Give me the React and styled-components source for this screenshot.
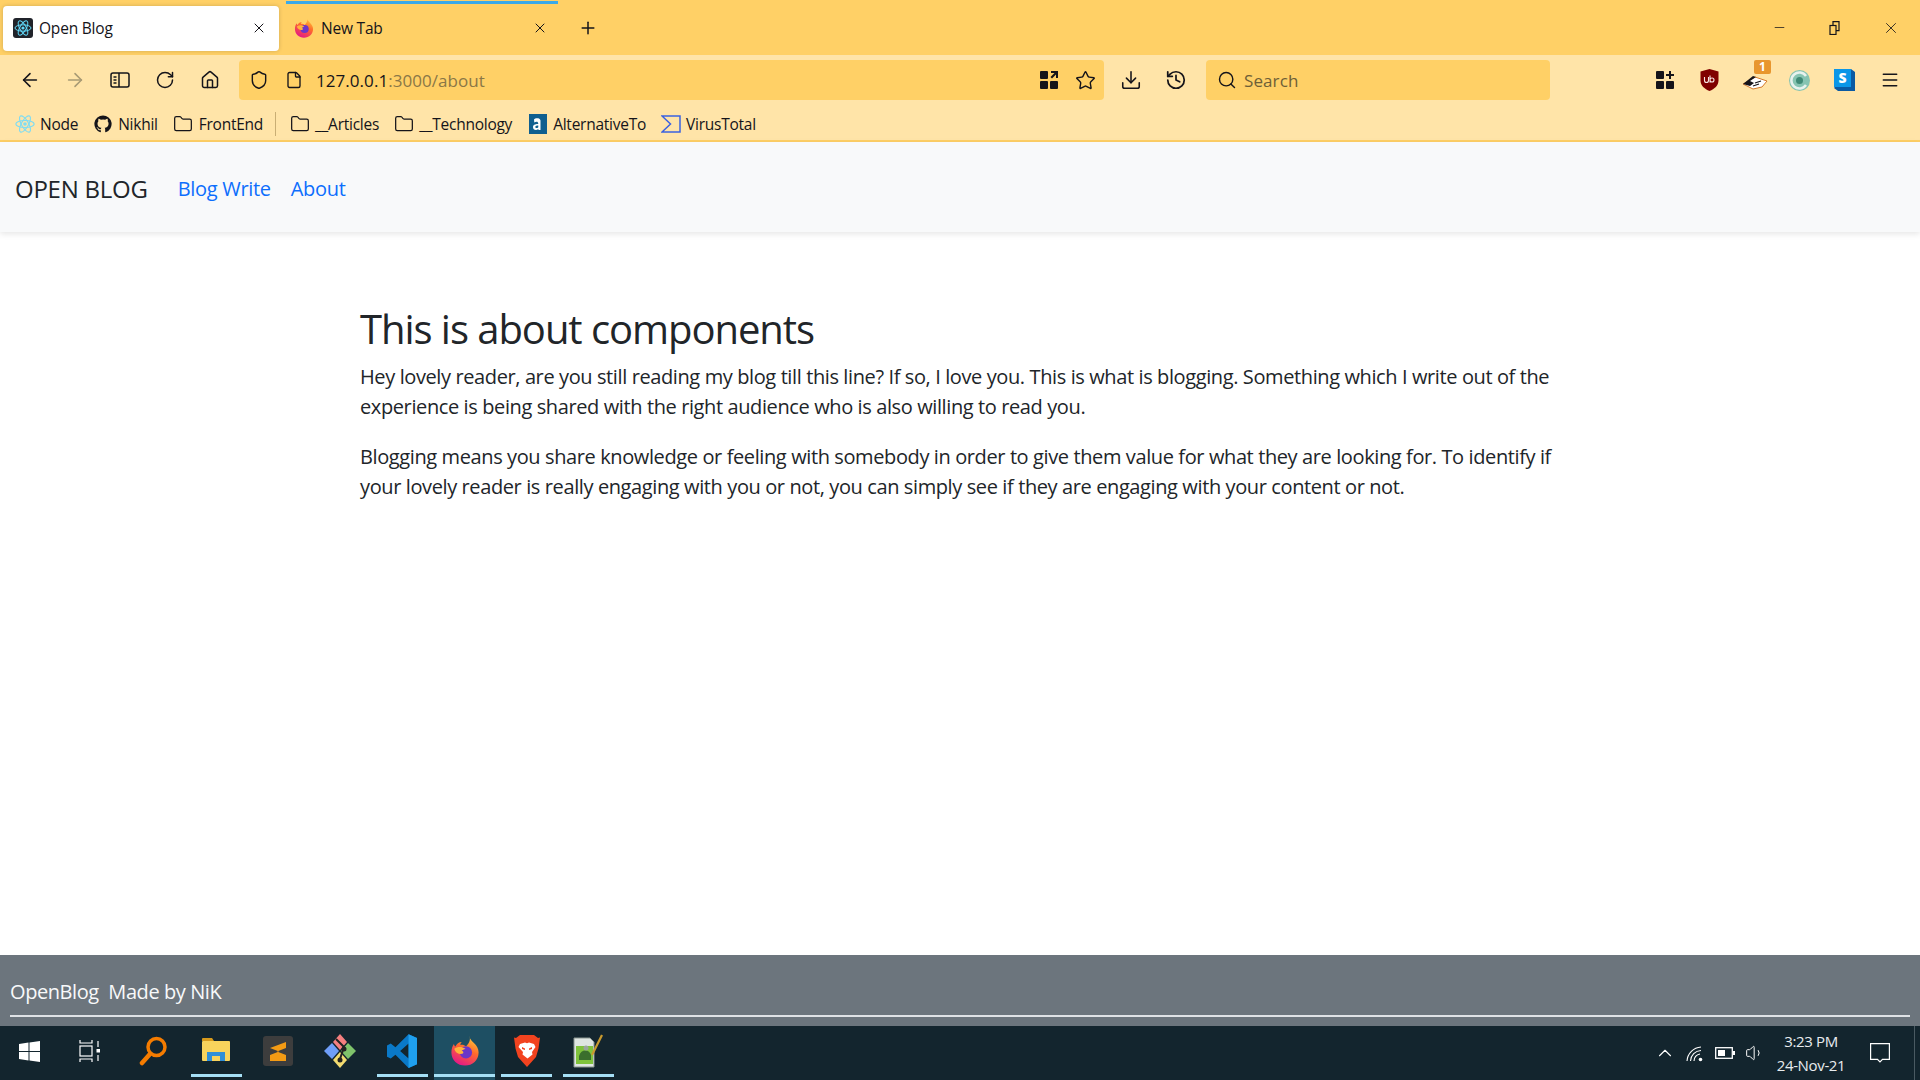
import styled, { createGlobalStyle } from "styled-components";
import {
  ArrowLeft,
  ArrowRight,
  RotateCw,
  Home,
  Shield,
  File,
  Star,
  Download,
  History,
  Search,
  Folder,
  X,
  Plus,
  Minus,
  Menu,
  ChevronUp,
  Volume1,
} from "lucide-react";

const GlobalStyle = createGlobalStyle`
  html, body { margin: 0; padding: 0; height: 100%; background: #fff; overflow: hidden; }
  * { box-sizing: border-box; }
  body { font-family: "Open Sans", "Noto Sans", sans-serif; color: #212529; }
`;

const Screen = styled.div`
  width: 1920px;
  height: 1080px;
  display: flex;
  flex-direction: column;
  overflow: hidden;
`;

/* browser chrome */
const TabBar = styled.div`
  height: 55px;
  background: #ffd066;
  display: flex;
  align-items: flex-start;
  padding-left: 3px;
  flex-shrink: 0;
`;

const Tab = styled.div`
  width: ${(p) => (p.$active ? "276px" : "272px")};
  margin-top: ${(p) => (p.$active ? "6px" : "1px")};
  height: ${(p) => (p.$active ? "45px" : "50px")};
  border-radius: ${(p) => (p.$active ? "4px" : "0")};
  background: ${(p) => (p.$active ? "#fff" : "transparent")};
  box-shadow: ${(p) => (p.$active ? "0 0 4px rgba(0,0,0,.18)" : "none")};
  border-top: ${(p) => (p.$active ? "0" : "3px solid #3ba9e8")};
  margin-left: ${(p) => (p.$active ? "0" : "7px")};
  padding: 0 ${(p) => (p.$active ? "12px" : "10px")} ${(p) => (p.$active ? "2px" : "0")} ${(p) => (p.$active ? "10px" : "8px")};
  display: flex;
  align-items: center;
  font-size: 15.5px;
  letter-spacing: -0.2px;
  color: #15141a;
`;

const TabTitle = styled.span`
  margin-left: ${(p) => p.$gap || 6}px;
  flex: 1;
`;

const NewTab = styled.div`
  width: 46px;
  height: 46px;
  margin-top: 5px;
  margin-left: 7px;
  display: flex;
  align-items: center;
  justify-content: center;
  color: #15141a;
`;

const WindowControls = styled.div`
  margin-left: auto;
  display: flex;
  height: 55px;
  align-items: center;
  padding-right: 1px;
`;

const WindowButton = styled.div`
  width: 56px;
  display: flex;
  justify-content: center;
  color: #15141a;
`;

const Toolbar = styled.div`
  height: 50px;
  background: #ffe4a8;
  display: flex;
  align-items: center;
  padding: 0 8px 0 7px;
  flex-shrink: 0;
`;

const ToolButton = styled.div`
  width: 45px;
  height: 40px;
  flex-shrink: 0;
  display: flex;
  align-items: center;
  justify-content: center;
  position: relative;
  color: ${(p) => (p.$dim ? "#a89a74" : "#15141a")};
`;

const UrlBar = styled.div`
  width: 865px;
  height: 40px;
  margin: 5px 4px 0 7px;
  align-self: flex-start;
  background: #ffd066;
  border-radius: 4px;
  display: flex;
  align-items: center;
  padding: 0 1px 0 0;
  font-size: 17px;
  letter-spacing: 0.05px;
  color: #15141a;
`;

const UrlIcon = styled.div`
  width: ${(p) => p.$w}px;
  display: flex;
  justify-content: center;
  flex-shrink: 0;
`;

const UrlText = styled.div`
  flex: 1;
  padding-left: 6px;
  span { color: #8a7746; }
`;

const SearchBar = styled.div`
  width: 344px;
  height: 40px;
  margin: 5px 0 0 8px;
  align-self: flex-start;
  background: #ffd066;
  border-radius: 4px;
  display: flex;
  align-items: center;
  padding-left: 11px;
  gap: 7px;
  font-size: 17px;
  letter-spacing: 0.1px;
  color: #6e5f37;
`;

const RightTools = styled.div`
  margin-left: auto;
  display: flex;
`;

const Badge = styled.span`
  position: absolute;
  top: 0;
  right: 6px;
  background: #e8962e;
  color: #fff;
  font-size: 12px;
  font-weight: 700;
  line-height: 14px;
  width: 17px;
  text-align: center;
  border-radius: 2px;
`;

const BookmarkBar = styled.div`
  height: 37px;
  background: #ffe4a8;
  border-bottom: 2px solid #ffd066;
  display: flex;
  align-items: center;
  padding: 2px 0 0 15px;
  font-size: 15.5px;
  letter-spacing: -0.25px;
  color: #15141a;
  flex-shrink: 0;
`;

const Bookmark = styled.div`
  display: flex;
  align-items: center;
  gap: ${(p) => p.$gap || 6}px;
  margin-right: ${(p) => p.$mr}px;
  white-space: nowrap;
`;

const BookmarkDivider = styled.div`
  width: 1px;
  height: 24px;
  background: #c9ae74;
  margin: 0 14px 0 -2px;
`;

/* page */
const Navbar = styled.nav`
  height: 90px;
  background: #f8f9fa;
  box-shadow: 0 2px 6px rgba(0, 0, 0, 0.1);
  display: flex;
  align-items: center;
  padding: 2px 0 0 15px;
  flex-shrink: 0;
  position: relative;
`;

const Brand = styled.a`
  font-size: 24px;
  letter-spacing: -0.25px;
  color: #212529;
  margin-right: 30px;
`;

const NavLink = styled.a`
  font-size: 20px;
  letter-spacing: -0.3px;
  color: #0d6efd;
  margin-right: 20px;
`;

const Main = styled.main`
  flex: 1;
  width: 1200px;
  margin: 0 auto;
  padding-top: 73px;
`;

const Heading = styled.h1`
  margin: 0 0 9px;
  font-size: 40px;
  font-weight: 400;
  line-height: 48px;
  letter-spacing: -1.05px;
  color: #212529;
`;

const Paragraph = styled.p`
  margin: 0 0 20px;
  font-size: 20px;
  line-height: 30px;
  letter-spacing: -0.39px;
`;

const Footer = styled.footer`
  height: 71px;
  background: #6c757d;
  padding: 22px 10px 0;
  color: #f8f9fa;
  font-size: 20px;
  letter-spacing: -0.42px;
  line-height: 30px;
  flex-shrink: 0;
`;

const FooterRule = styled.hr`
  margin: 8px 0 0;
  border: 0;
  border-top: 2px solid #dfe2e6;
`;

/* windows taskbar */
const Taskbar = styled.div`
  height: 54px;
  background: #13252e;
  display: flex;
  flex-shrink: 0;
  padding-right: 5px;
`;

const TaskItem = styled.div`
  width: 61px;
  margin-right: 1px;
  height: 54px;
  padding: 0 ${(p) => p.$pr || 0}px 4px 0;
  display: flex;
  align-items: center;
  justify-content: center;
  position: relative;
  background: ${(p) => (p.$active ? "#1e4f63" : "transparent")};
  &::after {
    content: "";
    display: ${(p) => (p.$open ? "block" : "none")};
    position: absolute;
    bottom: 3px;
    left: ${(p) => (p.$active ? "0" : "5px")};
    right: ${(p) => (p.$active ? "0" : "5px")};
    height: 3px;
    background: #a5dff5;
  }
`;

const Tray = styled.div`
  margin-left: auto;
  display: flex;
  align-items: center;
  color: #fff;
  padding-right: 11px;
  border-right: 1px solid #4a5a62;
`;

const TrayIcon = styled.div`
  width: ${(p) => p.$w || 30}px;
  display: flex;
  justify-content: center;
`;

const Clock = styled.div`
  width: 92px;
  margin-left: -5px;
  text-align: center;
  font-size: 15px;
  letter-spacing: -0.35px;
  line-height: 24px;
  color: #e8ecee;
`;

const ReactLogo = () => (
  <svg width="20" height="20" viewBox="0 0 24 24" fill="none" stroke="#7fdcf2" strokeWidth="1.4">
    <ellipse cx="12" cy="12" rx="11" ry="4.2" />
    <ellipse cx="12" cy="12" rx="11" ry="4.2" transform="rotate(60 12 12)" />
    <ellipse cx="12" cy="12" rx="11" ry="4.2" transform="rotate(120 12 12)" />
    <circle cx="12" cy="12" r="2.2" fill="#7fdcf2" stroke="none" />
  </svg>
);

const ReactFavicon = () => (
  <svg width="20" height="20" viewBox="0 0 20 20">
    <rect width="20" height="20" rx="3" fill="#20232a" />
    <g fill="none" stroke="#61dafb" strokeWidth="1">
      <ellipse cx="10" cy="10" rx="8" ry="3.2" />
      <ellipse cx="10" cy="10" rx="8" ry="3.2" transform="rotate(60 10 10)" />
      <ellipse cx="10" cy="10" rx="8" ry="3.2" transform="rotate(120 10 10)" />
    </g>
    <circle cx="10" cy="10" r="1.6" fill="#61dafb" />
  </svg>
);

const FirefoxLogo = ({ size = 20 }) => (
  <svg width={size} height={size} viewBox="0 0 32 32">
    <defs>
      <linearGradient id={`ffBody${size}`} x1="0.8" y1="0" x2="0.3" y2="1">
        <stop offset="0" stopColor="#ffd13a" />
        <stop offset="0.45" stopColor="#ff6a2b" />
        <stop offset="1" stopColor="#e3168a" />
      </linearGradient>
    </defs>
    <path
      d="M21 0c-.3 3.500 2.500 5 4.500 7.500C28.500 10.500 30.500 13.500 30.500 17.500 30.500 25.500 24 31.500 16 31.500S1.500 25.500 1.500 17.500c0-3.500 1-6.500 2.700-9 .2 1.300.8 2.300 1.600 2.800C7 8.500 9.500 6.500 12.500 6.500c-1 1-1.500 2-1.500 3 2-.5 4.500 0 6 1.500 3-2.500 5-6 4-11z"
      fill={`url(#ffBody${size})`}
    />
    <circle cx="17" cy="17.500" r="6.500" fill="#6c36c9" />
    <path d="M4.500 13.500c3.500-2.500 8-2.500 12 0l-4 2c2 1 2.500 3 .5 3.500-4 .5-7.500-1.500-8.500-5.500z" fill="#ffb23c" />
  </svg>
);

const GithubMark = () => (
  <svg width="18" height="18" viewBox="0 0 24 24" fill="#15141a">
    <path d="M12 .5a11.500 11.500 0 0 0-3.640 22.410c.58.11.79-.25.79-.56v-2c-3.200.7-3.880-1.540-3.880-1.540-.52-1.330-1.280-1.690-1.280-1.690-1.050-.72.08-.7.08-.7 1.160.08 1.770 1.190 1.770 1.190 1.030 1.770 2.700 1.260 3.360.96.100-.75.400-1.260.73-1.550-2.550-.29-5.240-1.280-5.240-5.690 0-1.260.45-2.280 1.190-3.090-.12-.29-.52-1.460.11-3.050 0 0 .97-.31 3.170 1.180a11 11 0 0 1 5.770 0c2.200-1.490 3.170-1.180 3.170-1.180.63 1.590.23 2.760.11 3.050.74.81 1.190 1.830 1.190 3.090 0 4.420-2.690 5.390-5.260 5.680.41.36.78 1.060.78 2.140v3.170c0 .31.21.67.8.56A11.500 11.500 0 0 0 12 .5z" />
  </svg>
);

const AltToIcon = () => (
  <svg width="18" height="20" viewBox="0 0 18 20">
    <rect width="18" height="20" fill="#0f5f8f" />
    <path
      d="M5 5.500c1-1.500 6-2 6.500 1V16H9.500l-.2-1c-2 2-5.500 1-5.300-2 .2-3 3.500-3 5.300-3 0-3-2.500-2.500-4-1.500z M9.300 11.500c-1.500 0-3 .2-3 1.500s2 1.500 3 .2z"
      fill="#fff"
      fillRule="evenodd"
    />
  </svg>
);

const VirusTotalIcon = () => (
  <svg width="20" height="20" viewBox="0 0 20 20" fill="none" stroke="#3b61e0" strokeWidth="1.5">
    <path d="M1 2h18v16H1l8.500-8z" />
  </svg>
);

const SidebarIcon = () => (
  <svg width="20" height="20" viewBox="0 0 20 20" fill="none" stroke="#15141a" strokeWidth="1.5">
    <rect x="1" y="3" width="18" height="14" rx="2" />
    <path d="M9 3v14M3.500 7h3M3.500 10h3M3.500 13h3" />
  </svg>
);

const GridIcon = ({ plus }) => (
  <svg width="18" height="20" viewBox="0 0 18 20" fill="#15141a">
    <rect x="0" y="1" width="8" height="8" rx="1" />
    <rect x="0" y="11" width="8" height="8" rx="1" />
    <rect x="10" y="11" width="8" height="8" rx="1" />
    {plus ? (
      <path d="M13 1h2v3h3v2h-3v3h-2V6h-3V4h3z" />
    ) : (
      <path d="M11 1h7v7h-2V4.500L12 8.500 10.500 7l4-4H11z" />
    )}
  </svg>
);

const UblockIcon = () => (
  <svg width="19" height="22" viewBox="0 0 19 22">
    <path d="M9.500 0l9 2.500v9c0 5-4 8.500-9 10.500C4.500 20 .5 16.500.5 11.500v-9z" fill="#800000" />
    <path
      d="M4.500 8v3.500a2 2 0 0 0 4 0V8M10 6.500v7M10 11a2 2 0 1 0 4 0 2 2 0 1 0-4 0"
      fill="none"
      stroke="#f7e4e4"
      strokeWidth="1.1"
    />
  </svg>
);

const PenIcon = () => (
  <svg width="26" height="22" viewBox="0 0 26 22">
    <path d="M1 15l12-7 12 4-5 6-9 2z" fill="#fff" stroke="#d57a2a" strokeWidth="1" />
    <path d="M1 15l10-8 3 1-6 4 4 2-4 3z" fill="#15141a" />
    <path d="M13 14l6-2M11 17l6-2" stroke="#15141a" strokeWidth="1.2" />
  </svg>
);

const CircleExt = () => (
  <svg width="21" height="21" viewBox="0 0 21 21">
    <circle cx="10.5" cy="10.5" r="10.5" fill="#86c4b2" />
    <path d="M17 6a8 8 0 1 0 0 9" fill="none" stroke="#e8f2ee" strokeWidth="2.5" />
    <circle cx="10.5" cy="10.5" r="3.500" fill="#3f8a76" />
  </svg>
);

const SkypeBox = () => (
  <svg width="21" height="22" viewBox="0 0 21 22">
    <path d="M17 0l4 3v19H4l-4-3z" fill="#0b5aa3" />
    <rect width="17" height="18" fill="#0a96e8" />
    <text x="8.500" y="14" fontSize="14" fontWeight="800" fill="#fff" textAnchor="middle" fontFamily="Open Sans">
      S
    </text>
  </svg>
);

const RestoreIcon = () => (
  <svg width="14" height="14" viewBox="0 0 14 14" fill="none" stroke="#15141a" strokeWidth="1.2">
    <rect x="2" y="4.500" width="6" height="9" />
    <path d="M5 4.500V.7h6v9H8" />
  </svg>
);

const WindowsLogo = () => (
  <svg width="21" height="21" viewBox="0 0 21 21" fill="#fff">
    <path d="M0 3l9.500-1.400V10H0zM10.500 1.400L21 0v10H10.500zM0 11h9.500v8.400L0 18zM10.500 11H21v10l-10.500-1.500z" />
  </svg>
);

const TaskViewIcon = () => (
  <svg width="22" height="24" viewBox="0 0 22 24" fill="none" stroke="#fff" strokeWidth="1.2">
    <path d="M1 1v3h12V1M1 23v-3h12v3" />
    <rect x="1" y="7" width="12" height="10" />
    <path d="M19 2v6M19 16v6" />
    <rect x="17.500" y="10" width="3.500" height="3.500" fill="#fff" stroke="none" />
  </svg>
);

const SearchApp = () => (
  <svg width="28" height="30" viewBox="0 0 28 30" fill="none" stroke="#f57c00" strokeWidth="3.5">
    <circle cx="17.500" cy="11" r="8.500" />
    <path d="M11 18l-8 9" strokeLinecap="round" strokeWidth="4.5" />
  </svg>
);

const FilesIcon = () => (
  <svg width="28" height="26" viewBox="0 0 28 26">
    <path d="M0 1a1 1 0 0 1 1-1h9l2 3H0z" fill="#d79a1c" />
    <rect y="3" width="28" height="20" rx="1" fill="#f8d35c" />
    <path d="M5 14h18v9h-5v-5h-8v5H5z" fill="#2f8fd8" />
    <rect x="10" y="18" width="8" height="5" fill="#f8d35c" />
  </svg>
);

const SublimeIcon = () => (
  <svg width="30" height="30" viewBox="0 0 30 30">
    <rect width="30" height="30" rx="3" fill="#3d3d3d" />
    <path d="M7 12l16-6v6l-9 3.500 9 3.500v6L7 25v-6l9-3.500L7 12z" fill="#f49b14" />
  </svg>
);

const GitIcon = () => (
  <svg width="32" height="36" viewBox="0 0 32 36">
    <path d="M15 18L8 10 0 18l8 8z" fill="#6f9ef8" />
    <path d="M16 17l7-8-7-8-7 8z" fill="#f57f7f" />
    <path d="M17 18l7-8 8 8-8 8z" fill="#7fc36b" />
    <path d="M16 19l7 8-7 8-7-8z" fill="#f3dc70" />
    <path d="M12 6l8 8M20 14l-4 12" stroke="#222" strokeWidth="2" fill="none" />
    <circle cx="20" cy="16" r="2.500" fill="#222" />
    <circle cx="16" cy="27" r="2.500" fill="#222" />
  </svg>
);

const VscodeIcon = () => (
  <svg width="30" height="36" viewBox="0 0 32 36">
    <path d="M23 0l9 4v28l-9 4L9 22l-5 4-4-2V12l4-2 5 4z M23 10l-9 8 9 8z" fill="#0a79c8" fillRule="evenodd" />
    <path d="M23 0l9 4v28l-9 4z" fill="#1fa0ef" />
  </svg>
);

const BraveIcon = () => (
  <svg width="26" height="32" viewBox="0 0 26 32">
    <path d="M6 0h14l4 3 2-.5-1.500 11L22 22l-9 10-9-10-2.500-8.500L0 2.500 2 3z" fill="#f2431f" />
    <path
      d="M6 9l5-1.500 2 .7 2-.7 5 1.500 1.500 3-3.500 5 .5 2.500-5 4-5-4 .5-2.500L4.500 12z"
      fill="#fff"
    />
    <path d="M8 12l3 1.500v1.500L8 14zM18 12l-3 1.500v1.500l3-1z" fill="#f2431f" />
  </svg>
);

const NotepadIcon = () => (
  <svg width="30" height="34" viewBox="0 0 30 34">
    <path d="M1 4h16l4 4v25H1z" fill="#dfe6e2" stroke="#8a9690" />
    <rect x="3" y="12" width="17" height="18" fill="#7fc33c" />
    <path d="M6 22c2-7 10-7 12-1v5H6z" fill="#3a6f2c" />
    <circle cx="13" cy="14" r="2.500" fill="#9aa59e" />
    <path d="M19 21L29 1" stroke="#c89a2e" strokeWidth="2.2" />
  </svg>
);

const WifiIcon = () => (
  <svg width="18" height="18" viewBox="0 0 18 18" fill="none" stroke="#fff" strokeWidth="1.1">
    <path d="M1 17A15 15 0 0 1 15 3M4.500 17A11 11 0 0 1 15 6.500M8 17A7.500 7.500 0 0 1 14 10" />
    <circle cx="14.500" cy="15.500" r="1.800" fill="#fff" stroke="none" />
  </svg>
);

const BatteryIcon = () => (
  <svg width="20" height="12" viewBox="0 0 20 12">
    <rect x="0.7" y="0.7" width="16.600" height="10.600" fill="none" stroke="#fff" strokeWidth="1.3" />
    <rect x="3" y="3" width="7" height="6" fill="#fff" />
    <rect x="18" y="4" width="2" height="4" fill="#fff" />
  </svg>
);

const NotificationIcon = () => (
  <svg width="20" height="20" viewBox="0 0 20 20" fill="none" stroke="#fff" strokeWidth="1.2">
    <path d="M.6.6h18.800v15.800H12.500L10 19l-2.500-2.600H.6z" />
  </svg>
);

const FolderIcon = () => <Folder size={20} strokeWidth={1.5} />;

const bookmarks = [
  { label: "Node", icon: <ReactLogo />, mr: 16, gap: 5 },
  { label: "Nikhil", icon: <GithubMark />, mr: 15 },
  { label: "FrontEnd", icon: <FolderIcon />, mr: 14 },
];

const bookmarksAfter = [
  { label: "__Articles", icon: <FolderIcon />, mr: 15, gap: 5 },
  { label: "__Technology", icon: <FolderIcon />, mr: 17, gap: 5 },
  { label: "AlternativeTo", icon: <AltToIcon />, mr: 15 },
  { label: "VirusTotal", icon: <VirusTotalIcon />, mr: 0, gap: 5 },
];

const taskItems = [
  { icon: <WindowsLogo />, pr: 2 },
  { icon: <TaskViewIcon />, pr: 5 },
  { icon: <SearchApp />, pr: 4 },
  { icon: <FilesIcon />, open: true, pr: 1 },
  { icon: <SublimeIcon />, pr: 2 },
  { icon: <GitIcon />, pr: 1 },
  { icon: <VscodeIcon />, open: true, pr: 1 },
  { icon: <FirefoxLogo size={30} />, open: true, active: true },
  { icon: <BraveIcon />, open: true },
  { icon: <NotepadIcon />, open: true, pr: 1 },
];

export default function App() {
  return (
    <Screen>
      <GlobalStyle />
      <TabBar>
        <Tab $active>
          <ReactFavicon />
          <TabTitle>Open Blog</TabTitle>
          <X size={16} strokeWidth={1.5} />
        </Tab>
        <Tab>
          <FirefoxLogo />
          <TabTitle $gap={7}>New Tab</TabTitle>
          <X size={16} strokeWidth={1.5} />
        </Tab>
        <NewTab>
          <Plus size={20} strokeWidth={1.8} />
        </NewTab>
        <WindowControls>
          <WindowButton>
            <Minus size={15} strokeWidth={1.2} />
          </WindowButton>
          <WindowButton>
            <RestoreIcon />
          </WindowButton>
          <WindowButton>
            <X size={18} strokeWidth={1.1} />
          </WindowButton>
        </WindowControls>
      </TabBar>

      <Toolbar>
        <ToolButton><ArrowLeft size={22} strokeWidth={1.7} /></ToolButton>
        <ToolButton $dim><ArrowRight size={22} strokeWidth={1.7} /></ToolButton>
        <ToolButton><SidebarIcon /></ToolButton>
        <ToolButton><RotateCw size={20} strokeWidth={1.8} /></ToolButton>
        <ToolButton><Home size={20} strokeWidth={1.8} /></ToolButton>
        <UrlBar>
          <UrlIcon $w={39}><Shield size={20} strokeWidth={1.7} /></UrlIcon>
          <UrlIcon $w={32}><File size={18} strokeWidth={1.8} /></UrlIcon>
          <UrlText>127.0.0.1<span>:3000/about</span></UrlText>
          <UrlIcon $w={36}><GridIcon /></UrlIcon>
          <UrlIcon $w={36}><Star size={21} strokeWidth={1.6} /></UrlIcon>
        </UrlBar>
        <ToolButton><Download size={22} strokeWidth={1.7} /></ToolButton>
        <ToolButton><History size={22} strokeWidth={1.9} /></ToolButton>
        <SearchBar>
          <Search size={20} strokeWidth={1.7} color="#15141a" />
          Search
        </SearchBar>
        <RightTools>
          <ToolButton><GridIcon plus /></ToolButton>
          <ToolButton><UblockIcon /></ToolButton>
          <ToolButton>
            <PenIcon />
            <Badge>1</Badge>
          </ToolButton>
          <ToolButton><CircleExt /></ToolButton>
          <ToolButton><SkypeBox /></ToolButton>
          <ToolButton><Menu size={20} strokeWidth={1.8} /></ToolButton>
        </RightTools>
      </Toolbar>

      <BookmarkBar>
        {bookmarks.map((b) => (
          <Bookmark key={b.label} $mr={b.mr} $gap={b.gap}>
            {b.icon}
            {b.label}
          </Bookmark>
        ))}
        <BookmarkDivider />
        {bookmarksAfter.map((b) => (
          <Bookmark key={b.label} $mr={b.mr} $gap={b.gap}>
            {b.icon}
            {b.label}
          </Bookmark>
        ))}
      </BookmarkBar>

      <Navbar>
        <Brand>OPEN BLOG</Brand>
        <NavLink>Blog Write</NavLink>
        <NavLink>About</NavLink>
      </Navbar>

      <Main>
        <Heading>This is about components</Heading>
        <Paragraph>
          Hey lovely reader, are you still reading my blog till this line? If so, I love you. This is what is blogging. Something which I write out of the experience is being shared with the right audience who is also willing to read you.
        </Paragraph>
        <Paragraph>
          Blogging means you share knowledge or feeling with somebody in order to give them value for what they are looking for. To identify if your lovely reader is really engaging with you or not, you can simply see if they are engaging with your content or not.
        </Paragraph>
      </Main>

      <Footer>
        OpenBlog&nbsp; Made by NiK
        <FooterRule />
      </Footer>

      <Taskbar>
        {taskItems.map((t, i) => (
          <TaskItem key={i} $open={t.open} $active={t.active} $pr={t.pr}>
            {t.icon}
          </TaskItem>
        ))}
        <Tray>
          <TrayIcon><ChevronUp size={22} strokeWidth={1.2} /></TrayIcon>
          <TrayIcon><WifiIcon /></TrayIcon>
          <TrayIcon><BatteryIcon /></TrayIcon>
          <TrayIcon><Volume1 size={20} strokeWidth={1.2} /></TrayIcon>
          <Clock>
            3:23 PM
            <br />
            24-Nov-21
          </Clock>
          <TrayIcon $w={46}><NotificationIcon /></TrayIcon>
        </Tray>
      </Taskbar>
    </Screen>
  );
}
